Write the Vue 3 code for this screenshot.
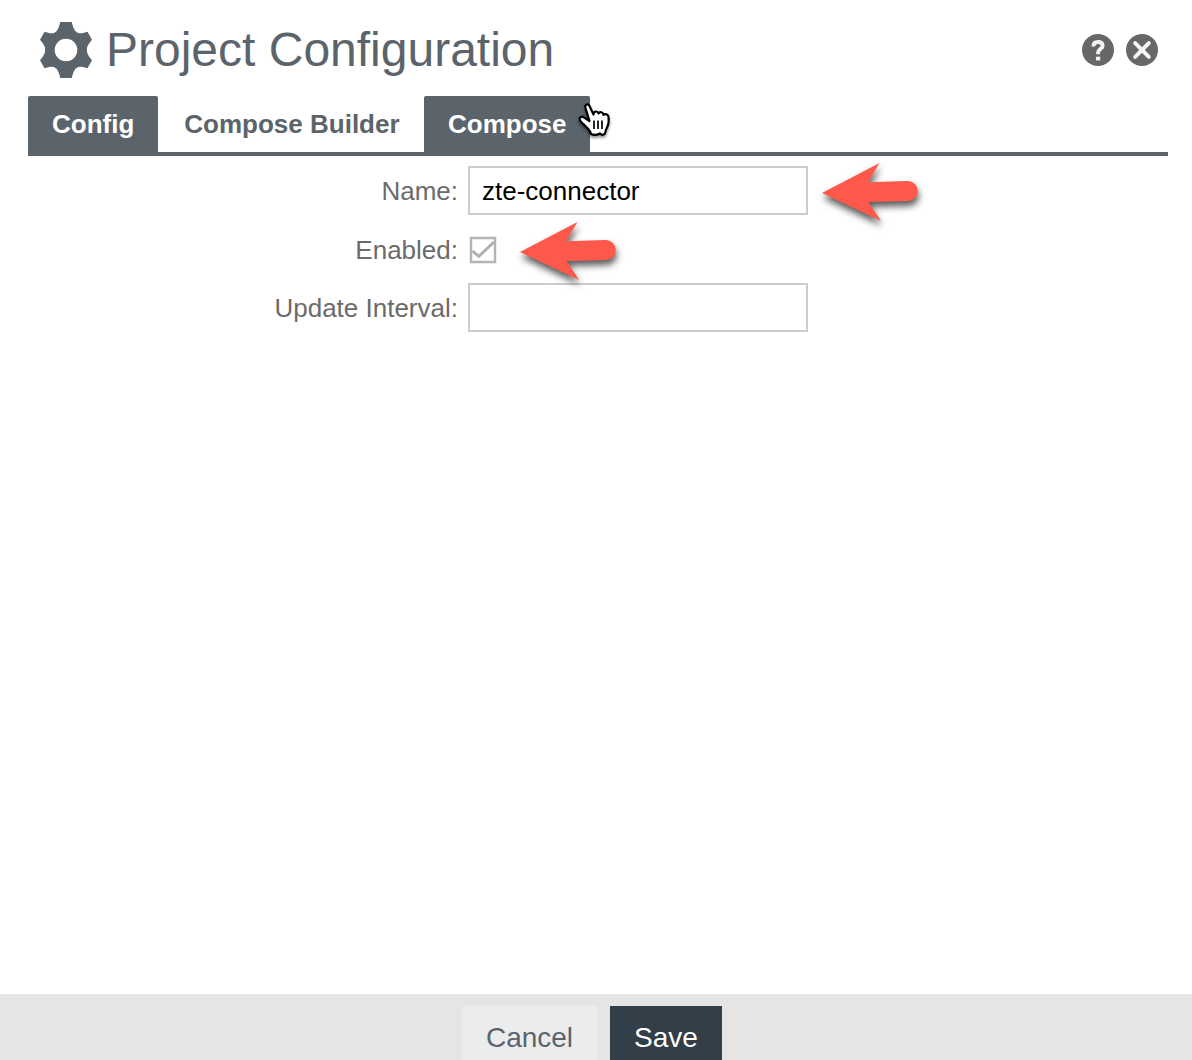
<script setup>
import { ref } from 'vue'

const tabs = [
  { label: 'Config', filled: true },
  { label: 'Compose Builder', filled: false },
  { label: 'Compose', filled: true },
]
const name = ref('zte-connector')
const interval = ref('')
</script>

<template>
  <div class="dialog">
    <header class="header">
      <svg class="gear" viewBox="0 0 54 56" width="54" height="56">
        <path
          fill="#5c646b"
          fill-rule="evenodd"
          d="M21.300 0H32.700L34.300 5.500Q35.600 9.500 39 10.900Q41.500 11.600 44 11.100L48.500 9.800L53 17.800L50 21.500Q47.800 24.500 47.800 28Q47.800 31.500 50 34.500L53 38.200L48.500 46.200L44 44.900Q41.500 44.400 39 45.100Q35.600 46.500 34.300 50.500L32.700 56H21.300L19.700 50.500Q18.400 46.500 15 45.100Q12.500 44.400 10 44.900L5.500 46.200L1 38.200L4 34.500Q6.200 31.500 6.200 28Q6.200 24.500 4 21.500L1 17.800L5.500 9.800L10 11.100Q12.500 11.600 15 10.900Q18.400 9.500 19.700 5.500ZM27 16.700A11.300 11.300 0 1 0 27 39.300A11.300 11.300 0 1 0 27 16.700Z"
        />
      </svg>
      <h1 class="title">Project Configuration</h1>
      <div class="actions">
        <svg width="32" height="32" viewBox="0 0 32 32">
          <circle cx="16" cy="16" r="16" fill="#676767" />
          <path d="M11.400 12.400Q11.400 8 16 8Q20.600 8 20.600 11.600Q20.600 13.700 18.200 15.200Q16 16.600 16 20.200" fill="none" stroke="#f4f4f4" stroke-width="3.800" />
          <rect x="14" y="22.700" width="4.200" height="3.700" fill="#f4f4f4" />
        </svg>
        <svg width="32" height="32" viewBox="0 0 32 32">
          <circle cx="16" cy="16" r="16" fill="#676767" />
          <path d="M9.200 9.200L22.800 22.800M22.800 9.200L9.200 22.800" fill="none" stroke="#f6f6f6" stroke-width="4" stroke-linecap="round" />
        </svg>
      </div>
    </header>

    <nav class="tabs">
      <div v-for="tab in tabs" :key="tab.label" class="tab" :class="{ filled: tab.filled }">
        {{ tab.label }}
      </div>
      <svg class="cursor" width="40" height="46" viewBox="0 0 40 46">
        <path
          d="M10.500 9C9.500 5.500 13 4 14.500 7L18.500 15.500C18.500 12 22.500 11.500 23.500 14.500C25 12.300 28 13 28.500 15.800C30.500 14.500 33.600 15.500 33.600 18.500V23C33.600 28 30.500 29 30 34.500C28.500 36 26.500 36 25 34.500C23 36 18.500 36.500 16 35C15 30 9 26.500 5.500 22.200C3.200 18.500 6.500 16.500 9.500 18.800L14.500 22Z"
          fill="#fff"
          stroke="#000"
          stroke-width="2.200"
          stroke-linejoin="round"
        />
        <path d="M19 21.500V30M23 21.500V30M27 21.500V30" fill="none" stroke="#000" stroke-width="1.700" />
      </svg>
    </nav>

    <main class="form">
      <div class="row">
        <label class="label" for="name">Name:</label>
        <div class="control">
          <input id="name" v-model="name" class="field" type="text" />
          <svg class="arrow name-arrow" width="110" height="76" viewBox="0 0 110 76">
            <path d="M2 33L59.500 3L48 22.300L87.500 21.100A10 10 0 0 1 88 41.100L48.500 42L61 61Z" fill="#ff594b" />
          </svg>
        </div>
      </div>
      <div class="row">
        <span class="label enabled-label">Enabled:</span>
        <div class="control">
          <svg class="check" width="28" height="28" viewBox="0 0 28 28">
            <rect x="2" y="2" width="24" height="24" fill="#fff" stroke="#b4b4b4" stroke-width="2.500" />
            <path d="M3.500 15L9.800 20.300L25 6" fill="none" stroke="#b0b0b0" stroke-width="3" />
          </svg>
          <svg class="arrow enabled-arrow" width="110" height="76" viewBox="0 0 110 76">
            <path d="M2 33L59.500 3L48 22.300L87.500 21.100A10 10 0 0 1 88 41.100L48.500 42L61 61Z" fill="#ff594b" />
          </svg>
        </div>
      </div>
      <div class="row">
        <label class="label" for="interval">Update Interval:</label>
        <div class="control">
          <input id="interval" v-model="interval" class="field" type="text" />
        </div>
      </div>
    </main>

    <footer class="footer">
      <button class="button cancel">Cancel</button>
      <button class="button save">Save</button>
    </footer>
  </div>
</template>

<style>
body {
  margin: 0;
  overflow: hidden;
}
</style>

<style scoped>
.dialog {
  box-sizing: border-box;
  display: flex;
  flex-direction: column;
  height: 1060px;
  overflow: hidden;
  background: #fff;
  color: #5c646b;
  font-family: "Liberation Sans", Arial, sans-serif;
}
.header {
  display: flex;
  flex: none;
  align-items: center;
  height: 96px;
  padding: 0 34px 0 39px;
  box-sizing: border-box;
}
.gear {
  margin: 0 13px 0 0;
  transform: translateY(2px);
}
.title {
  margin: 0;
  font-size: 48px;
  font-weight: 400;
  line-height: 56px;
  transform: translateY(2px);
}
.actions {
  display: flex;
  gap: 12px;
  margin-left: auto;
  padding-top: 4px;
}
.tabs {
  position: relative;
  display: flex;
  flex: none;
  height: 56px;
  margin: 0 24px 0 28px;
  border-bottom: 4px solid #5c646b;
}
.tab {
  padding: 0 24px;
  font-size: 26px;
  font-weight: 700;
  line-height: 56px;
}
.tab:nth-child(2) {
  padding-left: 26px;
  padding-right: 24px;
}
.tab:nth-child(3) {
  padding-left: 24.500px;
  padding-right: 23.500px;
}
.tab.filled {
  background: #5c646b;
  color: #fff;
  border-radius: 2px 2px 0 0;
}
.cursor {
  position: absolute;
  left: 547px;
  top: 3px;
  filter: drop-shadow(0 2px 1.500px rgba(0, 0, 0, 0.45));
}
.form {
  display: flex;
  flex: 1;
  flex-direction: column;
  gap: 10px;
  padding-top: 10px;
}
.row {
  display: flex;
  align-items: center;
  height: 48.500px;
}
.label {
  width: 458px;
  margin-right: 10px;
  padding-top: 2px;
  color: #6b6b6b;
  font-size: 26px;
  text-align: right;
}
.enabled-label {
  padding-top: 4px;
}
.control {
  position: relative;
  display: flex;
  align-items: center;
}
.field {
  box-sizing: border-box;
  width: 340px;
  height: 49px;
  padding: 2px 12px 0;
  border: 2px solid #ccc;
  border-radius: 0;
  outline: none;
  background: #fff;
  color: #000;
  font: 26px "Liberation Sans", Arial, sans-serif;
}
.check {
  margin: 2px 0 0 1px;
}
.arrow {
  position: absolute;
  z-index: 1;
  overflow: visible;
  filter: drop-shadow(1px 5px 3.500px rgba(0, 0, 0, 0.65));
}
.name-arrow {
  left: 352px;
  top: -6px;
}
.enabled-arrow {
  left: 50px;
  top: -15px;
}
.footer {
  display: flex;
  flex: none;
  gap: 13px;
  box-sizing: border-box;
  height: 66px;
  padding: 12px 0 0 462px;
  background: #e5e5e5;
}
.button {
  height: 64px;
  padding: 0;
  border: 0;
  font: 28px "Liberation Sans", Arial, sans-serif;
}
.cancel {
  width: 135px;
  background: #ebecee;
  color: #5c646b;
}
.save {
  width: 112px;
  background: #323e48;
  color: #fff;
}
</style>
